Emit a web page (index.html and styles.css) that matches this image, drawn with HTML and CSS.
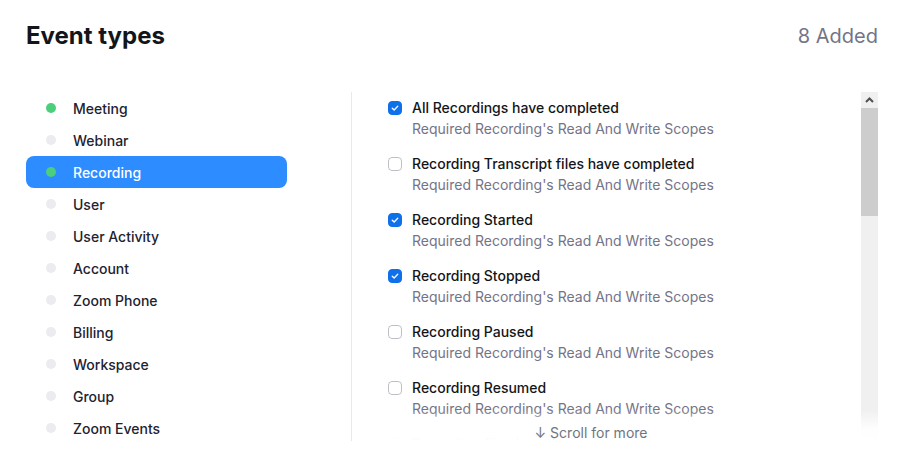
FILE: index.html
```html
<!DOCTYPE html>
<html>
<head>
<meta charset="utf-8">
<link rel="stylesheet" href="styles.css">
</head>
<body>
<div class="page">
  <header class="head">
    <h1 class="title">Event types</h1>
    <span class="count">8 Added</span>
  </header>
  <div class="main">
    <ul class="cats">
      <li class="cat"><span class="dot on"></span>Meeting</li>
      <li class="cat"><span class="dot"></span>Webinar</li>
      <li class="cat active"><span class="dot on"></span>Recording</li>
      <li class="cat"><span class="dot"></span>User</li>
      <li class="cat"><span class="dot"></span>User Activity</li>
      <li class="cat"><span class="dot"></span>Account</li>
      <li class="cat"><span class="dot"></span>Zoom Phone</li>
      <li class="cat"><span class="dot"></span>Billing</li>
      <li class="cat"><span class="dot"></span>Workspace</li>
      <li class="cat"><span class="dot"></span>Group</li>
      <li class="cat"><span class="dot"></span>Zoom Events</li>
    </ul>
    <div class="panel">
      <div class="list">
        <div class="item">
          <span class="box checked"><svg viewBox="0 0 14 14"><path d="M3.8 7.2 L6 9.3 L10.2 4.9" fill="none" stroke="#fff" stroke-width="1.5" stroke-linecap="round" stroke-linejoin="round"/></svg></span>
          <div class="txt"><div class="name">All Recordings have completed</div><div class="sub">Required Recording's Read And Write Scopes</div></div>
        </div>
        <div class="item">
          <span class="box"></span>
          <div class="txt"><div class="name">Recording Transcript files have completed</div><div class="sub">Required Recording's Read And Write Scopes</div></div>
        </div>
        <div class="item">
          <span class="box checked"><svg viewBox="0 0 14 14"><path d="M3.8 7.2 L6 9.3 L10.2 4.9" fill="none" stroke="#fff" stroke-width="1.5" stroke-linecap="round" stroke-linejoin="round"/></svg></span>
          <div class="txt"><div class="name">Recording Started</div><div class="sub">Required Recording's Read And Write Scopes</div></div>
        </div>
        <div class="item">
          <span class="box checked"><svg viewBox="0 0 14 14"><path d="M3.8 7.2 L6 9.3 L10.2 4.9" fill="none" stroke="#fff" stroke-width="1.5" stroke-linecap="round" stroke-linejoin="round"/></svg></span>
          <div class="txt"><div class="name">Recording Stopped</div><div class="sub">Required Recording's Read And Write Scopes</div></div>
        </div>
        <div class="item">
          <span class="box"></span>
          <div class="txt"><div class="name">Recording Paused</div><div class="sub">Required Recording's Read And Write Scopes</div></div>
        </div>
        <div class="item">
          <span class="box"></span>
          <div class="txt"><div class="name">Recording Resumed</div><div class="sub">Required Recording's Read And Write Scopes</div></div>
        </div>
        <div class="item ghost">
          <span class="box"></span>
          <div class="txt"><div class="name">Recording files have been deleted</div></div>
        </div>
      </div>
      <div class="scrollbar">
        <div class="sb-up"><svg viewBox="0 0 17 16"><path d="M5 10 L8.5 6.5 L12 10" fill="none" stroke="#505050" stroke-width="2"/></svg></div>
        <div class="sb-thumb"></div>
        <div class="sb-track"></div>
      </div>
      <div class="fade"><span class="more">↓ Scroll for more</span></div>
    </div>
  </div>
</div>
</body>
</html>
```

FILE: styles.css
```css
* { box-sizing: border-box; }
html, body { margin: 0; padding: 0; background: #fff; }
body {
  font-family: Inter, "Noto Sans", "Liberation Sans", sans-serif;
  color: #222230;
  overflow: hidden;
  height: 461px;
}
.page {
  padding: 20px 28px 0 26px;
}
.head {
  display: flex;
  justify-content: space-between;
  align-items: center;
  height: 32px;
}
.title {
  margin: 0;
  font-size: 24px;
  line-height: 32px;
  font-weight: 700;
  color: #131619;
}
.count {
  font-size: 20px;
  line-height: 32px;
  color: #747487;
}
.main {
  display: flex;
  margin-top: 40px;
  height: 349px;
}
.cats {
  list-style: none;
  margin: 0 64px 0 0;
  padding: 0;
  width: 261px;
  flex: none;
}
.cat {
  display: flex;
  align-items: center;
  height: 32px;
  padding-left: 20px;
  font-size: 14px;
  font-weight: 500;
  color: #222230;
  border-radius: 8px;
}
.cat.active {
  background: #2d8cff;
  color: #fff;
}
.dot {
  width: 10px;
  height: 10px;
  border-radius: 50%;
  background: #ebebf0;
  margin-right: 17px;
  flex: none;
}
.dot.on { background: #4ccf7a; }
.panel {
  position: relative;
  flex: 1;
  display: flex;
  border-left: 1px solid #e8e8ed;
  overflow: hidden;
}
.list {
  flex: 1;
  padding: 6px 0 0 36px;
}
.item {
  display: flex;
  align-items: flex-start;
  margin-bottom: 15px;
}
.box {
  width: 14px;
  height: 14px;
  margin-top: 3px;
  margin-right: 10px;
  border-radius: 4px;
  border: 1px solid #bfbfca;
  background: #fff;
  flex: none;
  display: flex;
}
.box.checked {
  background: #0e71eb;
  border-color: #0e71eb;
}
.box svg { width: 12px; height: 12px; }
.name {
  font-size: 14px;
  line-height: 20px;
  font-weight: 500;
  color: #131619;
}
.sub {
  font-size: 14px;
  line-height: 20px;
  margin-top: 1px;
  color: #747487;
}
.scrollbar {
  width: 17px;
  flex: none;
  display: flex;
  flex-direction: column;
  background: #f0f0f0;
}
.sb-up { height: 16px; display: flex; }
.sb-up svg { width: 17px; height: 16px; }
.sb-thumb { height: 108px; background: #cdcdcd; }
.sb-track { flex: 1; }
.fade {
  position: absolute;
  left: 0;
  right: 0;
  bottom: 0;
  height: 31px;
  background: linear-gradient(to bottom, rgba(255,255,255,0) 0%, rgba(255,255,255,0.9) 60%, #fff 100%);
  display: flex;
  justify-content: center;
  padding: 0 48px 0 0;
}
.more {
  font-size: 14px;
  line-height: 16px;
  margin-top: 15px;
  color: #6e7680;
}
```
